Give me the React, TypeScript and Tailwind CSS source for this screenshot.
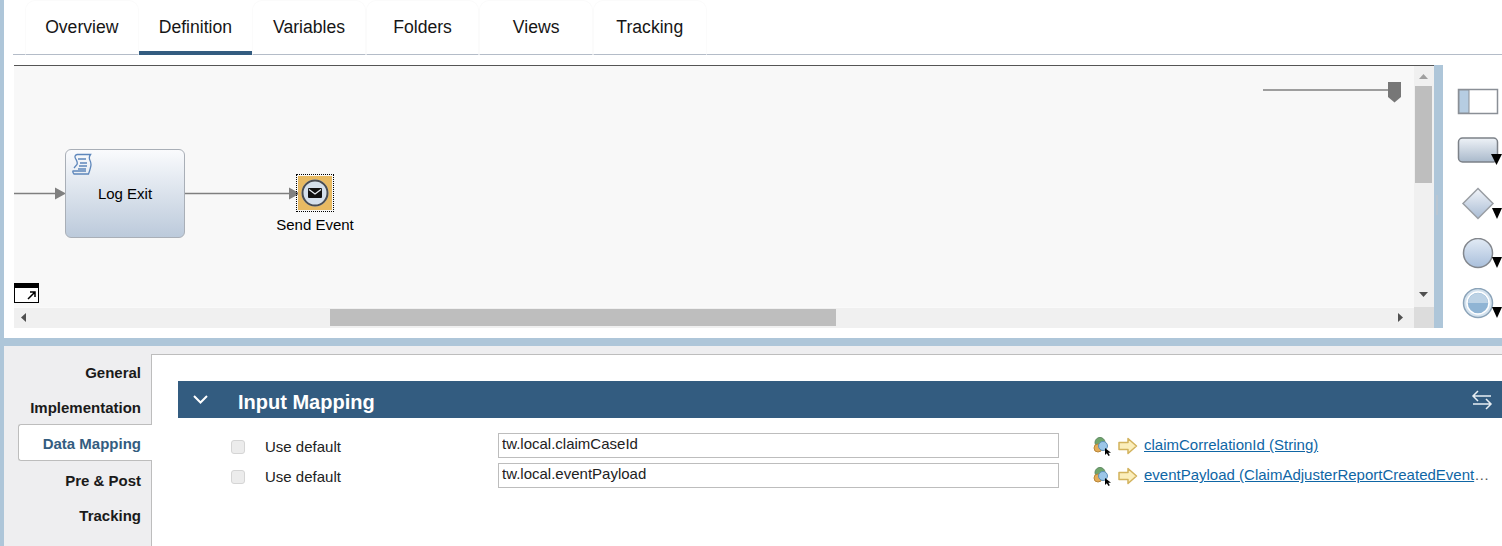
const tabs = ["Overview", "Definition", "Variables", "Folders", "Views", "Tracking"];
const sideItems = ["General", "Implementation", "Data Mapping", "Pre & Post", "Tracking"];

const mappings = [
  { value: "tw.local.claimCaseId", link: "claimCorrelationId (String)", more: false },
  { value: "tw.local.eventPayload", link: "eventPayload (ClaimAdjusterReportCreatedEvent", more: true },
];

function Palette() {
  return (
    <div className="w-[59px] flex flex-col pl-[14px] pt-[22px] bg-white">
      {/* swimlane */}
      <svg width="44" height="28" viewBox="0 0 44 28" className="block">
        <rect x="1.500" y="2.500" width="39" height="24" fill="#fff" stroke="#8a8f96" strokeWidth="1.500" />
        <rect x="2" y="3" width="10" height="23" fill="#b6cde2" stroke="#8a8f96" />
      </svg>
      {/* activity */}
      <svg width="45" height="32" viewBox="0 0 45 32" className="block mt-[22px]">
        <defs>
          <linearGradient id="pal-task" x1="0" y1="0" x2="0" y2="1">
            <stop offset="0" stopColor="#eef2f7" />
            <stop offset="1" stopColor="#a9b9cb" />
          </linearGradient>
        </defs>
        <rect x="1.500" y="1" width="39" height="24" rx="4" fill="url(#pal-task)" stroke="#7c8188" strokeWidth="1.500" />
        <path d="M34 17h11l-5.500 11z" fill="#000" />
      </svg>
      {/* gateway */}
      <svg width="45" height="34" viewBox="0 0 45 34" className="block mt-[18px]">
        <defs>
          <linearGradient id="pal-gate" x1="0" y1="0" x2="0" y2="1">
            <stop offset="0" stopColor="#f1f4f9" />
            <stop offset="1" stopColor="#a9bcd4" />
          </linearGradient>
        </defs>
        <path d="M21 1.500 36 16.500 21 31.500 6 16.500z" fill="url(#pal-gate)" stroke="#9a9ea4" strokeWidth="1.500" />
        <path d="M35 21h10l-5 11z" fill="#000" />
      </svg>
      {/* event */}
      <svg width="45" height="34" viewBox="0 0 45 34" className="block mt-[17px]">
        <defs>
          <linearGradient id="pal-event" x1="0" y1="0" x2="0" y2="1">
            <stop offset="0" stopColor="#e2ebf5" />
            <stop offset="1" stopColor="#a9bfdb" />
          </linearGradient>
        </defs>
        <circle cx="21" cy="15" r="14.500" fill="url(#pal-event)" stroke="#83878d" strokeWidth="1.500" />
        <path d="M35 19h10l-5 11z" fill="#000" />
      </svg>
      {/* intermediate event */}
      <svg width="45" height="34" viewBox="0 0 45 34" className="block mt-[16px]">
        <circle cx="21" cy="15" r="14.500" fill="#d5e3ef" stroke="#8ba3b8" strokeWidth="1.500" />
        <circle cx="21" cy="15" r="11" fill="#8fb4d4" stroke="#fff" strokeWidth="1.500" />
        <path d="M11 15a10 10 0 0 1 20 0z" fill="#bcd2e5" />
        <path d="M35 19h10l-5 11z" fill="#000" />
      </svg>
    </div>
  );
}

function ScriptIcon() {
  return (
    <svg width="20" height="23" viewBox="0 0 20 23" fill="none" stroke="#5d86bb" strokeWidth="1.300" className="block">
      <path d="M5 1.500h13.500c-1.500 2-1.500 4-.5 6 1 2 1.500 4 .5 7-.5 2-1 4-2 6.500H2c-1-1-1.500-2-1-3h13M5 1.500C3 2 2.500 3.500 3.500 5.500c1 2 2.500 3.500 1.500 6L2 15" />
      <path d="M6 6h8M8 10h7M7 13h8M6 16h8" />
    </svg>
  );
}

function SendEventIcon() {
  return (
    <div className="w-[38px] h-[38px] border border-dotted border-black p-px">
      <svg width="34" height="34" viewBox="0 0 34 34" className="block">
        <rect width="34" height="34" fill="#e8ba62" />
        <circle cx="17" cy="17" r="13.500" fill="#d5e0ec" />
        <circle cx="17" cy="17" r="12.500" fill="none" stroke="#4a4d52" strokeWidth="2" />
        <rect x="10" y="12" width="14" height="10" rx="1" fill="#111" />
        <path d="M11 13.500 17 18l6-4.500" fill="none" stroke="#e8edf3" strokeWidth="1.200" />
      </svg>
    </div>
  );
}

function CanvasArea() {
  return (
    <div className="relative flex-1 bg-[#f8f8f8] overflow-hidden">
      {/* connectors */}
      <svg width="400" height="40" viewBox="0 0 400 40" className="absolute left-0 top-[107px]">
        <path d="M0 20.500h42M171 20.500h114" stroke="#7f7f7f" strokeWidth="1.300" />
        <path d="M41 14.500 52 20.500 41 26.500zM275 14.500 286 20.500 275 26.500z" fill="#808080" />
      </svg>
      {/* task node */}
      <div className="absolute left-[51px] top-[83px] w-[120px] h-[89px] rounded-[6px] border border-[#a9afb7] bg-gradient-to-b from-[#fafbfd] to-[#bccadb] flex items-center justify-center">
        <div className="absolute left-[6px] top-[3px]">
          <ScriptIcon />
        </div>
        <span className="text-[15px] text-black pt-[2px]">Log Exit</span>
      </div>
      {/* send event node */}
      <div className="absolute left-[282px] top-[108px]">
        <SendEventIcon />
      </div>
      <div className="absolute left-[251px] top-[148px] w-[100px] text-center text-[15px] text-black">Send Event</div>
      {/* zoom slider */}
      <svg width="145" height="24" viewBox="0 0 145 24" className="absolute left-[1249px] top-[14px]">
        <path d="M0 10h136" stroke="#808080" strokeWidth="1.500" />
        <path d="M125 2h13v15l-6.500 5.500L125 17z" fill="#777" />
      </svg>
      {/* open in window */}
      <svg width="25" height="20" viewBox="0 0 25 20" className="absolute left-0 top-[217px]">
        <rect x="0.500" y="0.500" width="24" height="19" fill="#fff" stroke="#000" />
        <rect width="25" height="5" fill="#000" />
        <path d="M14 16l7-7M16 9h5v5" fill="none" stroke="#000" strokeWidth="1.500" />
      </svg>
    </div>
  );
}

function VerticalScroll() {
  return (
    <div className="w-[20px] bg-[#f0f0f0] flex flex-col items-center pr-px">
      <svg width="9" height="5" viewBox="0 0 9 5" className="mt-[8px]">
        <path d="M0 5 4.500 0 9 5z" fill="#a0a0a0" />
      </svg>
      <div className="w-[17px] h-[97px] bg-[#bebebe] mt-[7px]" />
      <svg width="9" height="5" viewBox="0 0 9 5" className="mt-auto mb-[10px]">
        <path d="M0 0h9L4.500 5z" fill="#505050" />
      </svg>
    </div>
  );
}

function HorizontalScroll() {
  return (
    <div className="h-[21px] flex">
      <div className="w-[1400px] bg-[#f0f0f0] border-t border-[#fafafa] flex items-center pl-[7px] pb-[2px]">
        <svg width="5" height="9" viewBox="0 0 5 9" className="shrink-0">
          <path d="M5 0v9L0 4.500z" fill="#505050" />
        </svg>
        <div className="ml-[304px] w-[506px] h-[17px] bg-[#bebebe]" />
        <svg width="5" height="9" viewBox="0 0 5 9" className="ml-[562px] shrink-0">
          <path d="M0 0v9l5-4.500z" fill="#505050" />
        </svg>
      </div>
      <div className="w-[20px] bg-[#dcdcdc]" />
    </div>
  );
}

function PickerIcon() {
  return (
    <svg width="20" height="20" viewBox="0 0 20 20" className="block">
      <circle cx="7" cy="6.500" r="5" fill="#6fa56c" stroke="#5f8a63" />
      <circle cx="5" cy="12" r="4" fill="#e5ad58" stroke="#b98638" />
      <circle cx="10" cy="10" r="4.500" fill="#9cc6e8" stroke="#5d8fb8" />
      <path d="M12 12v7l1.800-1.800L15.500 20l1.300-.7-1.500-2.600H18z" fill="#000" />
    </svg>
  );
}

function ArrowIcon() {
  return (
    <svg width="20" height="18" viewBox="0 0 20 18" className="block">
      <path d="M1 5.500h9V1.500L18.500 9 10 16.500v-4H1z" fill="#fbeebb" stroke="#d2b25c" strokeWidth="1.500" strokeLinejoin="round" />
    </svg>
  );
}

function MappingRow({ value, link, more }: { value: string; link: string; more: boolean }) {
  return (
    <div className="flex items-center h-[25px]">
      <span className="ml-[53px] w-[14px] h-[14px] rounded-[3px] border border-[#d5d5d5] bg-[#ececec] shrink-0 mt-[2px]" />
      <span className="ml-[20px] w-[233px] text-[15px] text-[#222] mt-[4px]">Use default</span>
      <input
        readOnly
        value={value}
        className="w-[561px] h-[25px] border border-[#bdbdbd] pl-[3px] pb-[5px] text-[15px] text-[#222] bg-white outline-none shrink-0"
      />
      <div className="ml-[34px] shrink-0">
        <PickerIcon />
      </div>
      <div className="ml-[5px] shrink-0">
        <ArrowIcon />
      </div>
      <div className="ml-[6px] whitespace-nowrap text-[15px]">
        <a href="#" className="text-[#0f66a5] underline">
          {link}
        </a>
        {more && <span className="text-[#555]">…</span>}
      </div>
    </div>
  );
}

export default function App() {
  return (
    <div
      className="w-[1502px] h-[546px] overflow-hidden bg-white border-l-4 border-[#aec6d9] flex flex-col"
      style={{ fontFamily: '"Liberation Sans", Arial, sans-serif' }}
    >
      {/* Top panel */}
      <div className="h-[338px] pl-[9px] flex flex-col shrink-0">
        <div className="h-[55px] border-b border-[#b4bcc8] flex pl-[12px] items-stretch shrink-0">
          {tabs.map((tab) => (
            <div
              key={tab}
              className={
                tab === "Definition"
                  ? "w-[113.600px] flex items-center justify-center text-[17.600px] text-[#161616] pt-[4px] border-b-4 border-[#335c80] -mb-px"
                  : "w-[113.600px] flex items-center justify-center text-[17.600px] text-[#161616] pb-[1px] rounded-t-[10px] border-t border-x border-[#fbfbfb] -mb-px border-b border-b-transparent"
              }
            >
              {tab}
            </div>
          ))}
        </div>
        <div className="mt-[10px] h-[263px] flex shrink-0 ml-px">
          <div className="w-[1420px] flex flex-col border-t border-[#555]">
            <div className="flex flex-1 min-h-0">
              <CanvasArea />
              <VerticalScroll />
            </div>
            <HorizontalScroll />
          </div>
          <div className="w-[9px] bg-[#aec6d9] flex flex-col">
            <div className="ml-[2px] mt-[130px] w-[2px] h-[20px] bg-[#b9c6d2]" />
          </div>
          <Palette />
        </div>
      </div>

      <div className="h-[8px] bg-[#aec6d9] shrink-0" />

      {/* Lower panel */}
      <div className="flex-1 min-h-0 bg-[#eeeef0] pt-[8px] flex">
        <div className="w-[147px] shrink-0 relative z-10 flex flex-col items-end pt-[1px]">
          {sideItems.map((item) =>
            item === "Data Mapping" ? (
              <div
                key={item}
                className="w-[134px] h-[37px] -mt-px -mr-px mb-[2px] bg-white border border-r-0 border-[#bdbdbd] rounded-l-[3px] flex items-center justify-end pr-[11px] pt-[3px] text-[15px] font-bold text-[#335c80]"
              >
                {item}
              </div>
            ) : (
              <div key={item} className="h-[35px] flex items-center pr-[10px] pt-[2px] text-[15px] font-bold text-[#1a1a1a]">
                {item}
              </div>
            ),
          )}
        </div>
        <div className="flex-1 bg-white border-t border-l border-[#bdbdbd] pl-[26px] pt-[26px]">
          <div className="h-[37px] bg-[#335c80] flex items-center text-white pl-[15px] pr-[9px]">
            <svg width="15" height="9" viewBox="0 0 15 9" fill="none" stroke="#fff" strokeWidth="2" className="shrink-0">
              <path d="M1 1l6.500 6.500L14 1" />
            </svg>
            <span className="ml-[30px] text-[20px] font-bold pt-[4px]">Input Mapping</span>
            <svg width="22" height="20" viewBox="0 0 22 20" fill="none" stroke="#e8eef3" strokeWidth="1.500" className="ml-auto shrink-0">
              <path d="M20 6H2M7 1 2 6l5 5M2 14h18M15 9l5 5-5 5" />
            </svg>
          </div>
          <div className="mt-[15px] flex flex-col gap-[5px]">
            {mappings.map((row) => (
              <MappingRow key={row.value} value={row.value} link={row.link} more={row.more} />
            ))}
          </div>
        </div>
      </div>
    </div>
  );
}
